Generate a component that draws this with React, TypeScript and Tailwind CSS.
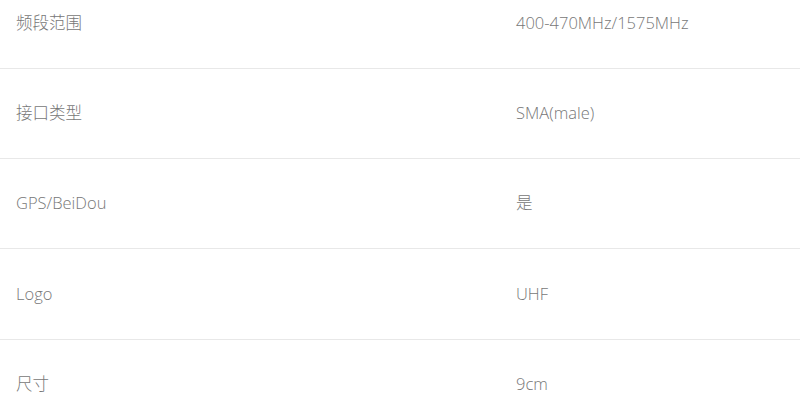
import React from 'react';

interface SpecRow {
  label: string;
  value: string;
}

const rows: SpecRow[] = [
  { label: '频段范围', value: '400-470MHz/1575MHz' },
  { label: '接口类型', value: 'SMA(male)' },
  { label: 'GPS/BeiDou', value: '是' },
  { label: 'Logo', value: 'UHF' },
  { label: '尺寸', value: '9cm' },
];

export default function App() {
  return (
    <div
      className="w-[800px] h-[419px] overflow-hidden bg-white text-[#777] text-[16.5px]"
      style={{ fontFamily: '"Open Sans", "Noto Sans CJK SC", sans-serif' }}
    >
      <div className="-mt-[21.5px]">
        {rows.map((row, idx) => (
          <div
            key={idx}
            className="flex items-center h-[90.33px] border-b border-[#e8e8e8] box-border"
          >
            <div className="w-[500px] pl-4 font-light">{row.label}</div>
            <div className="flex-1 pl-4 font-light">{row.value}</div>
          </div>
        ))}
      </div>
    </div>
  );
}
